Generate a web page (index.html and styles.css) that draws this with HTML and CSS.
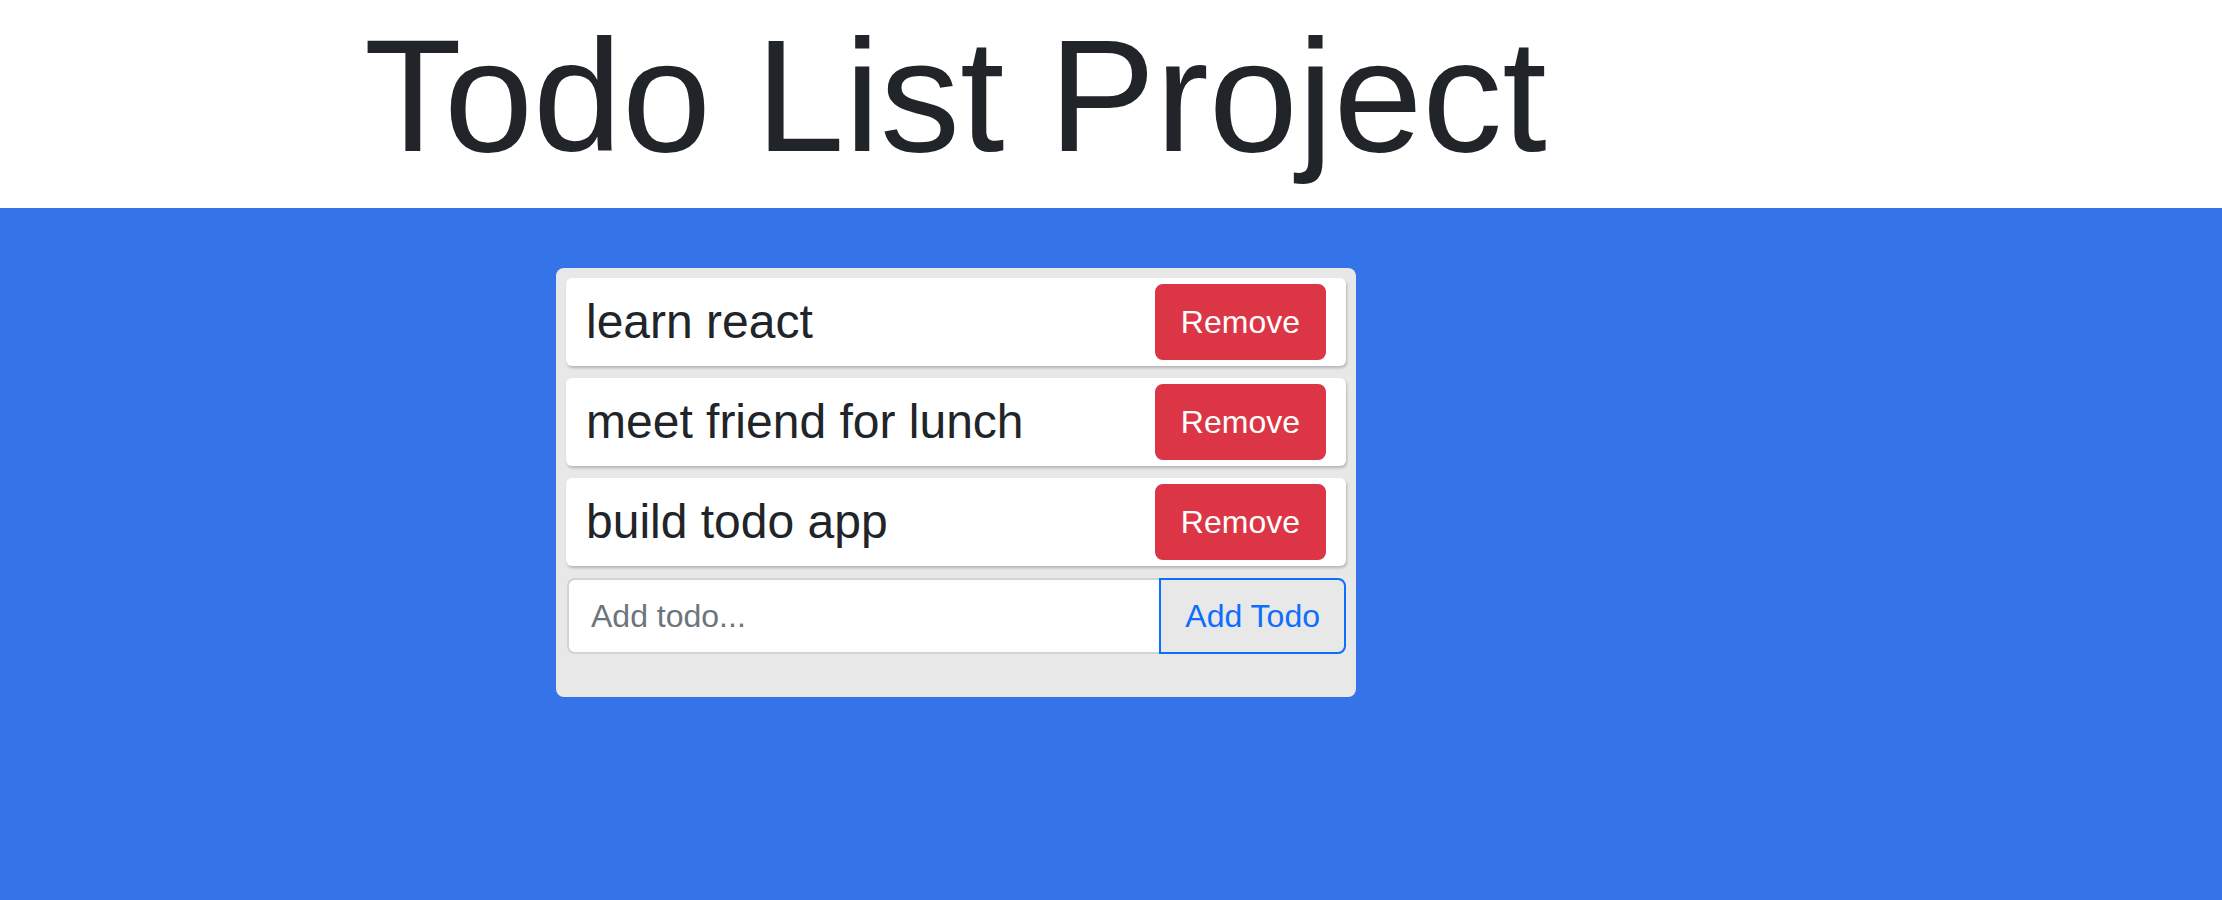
FILE: index.html
```html
<!DOCTYPE html>
<html lang="en">
<head>
<meta charset="utf-8">
<title>Todo List Project</title>
<link rel="stylesheet" href="styles.css">
</head>
<body>
<header class="header">
  <h1 class="title">Todo List Project</h1>
</header>
<main class="main">
  <section class="card">
    <div class="todo">
      <span class="todo-text">learn react</span>
      <button class="btn btn-danger">Remove</button>
    </div>
    <div class="todo">
      <span class="todo-text">meet friend for lunch</span>
      <button class="btn btn-danger">Remove</button>
    </div>
    <div class="todo">
      <span class="todo-text">build todo app</span>
      <button class="btn btn-danger">Remove</button>
    </div>
    <form class="add-form">
      <input class="add-input" type="text" placeholder="Add todo...">
      <button class="btn btn-outline" type="button">Add Todo</button>
    </form>
  </section>
</main>
</body>
</html>
```
FILE: styles.css
```css
* { box-sizing: border-box; }
html, body { margin: 0; padding: 0; }
body {
  font-family: "Liberation Sans", Arial, sans-serif;
  color: #212529;
  background: #3573e8;
  min-height: 900px;
}
.header {
  background: #ffffff;
  padding-left: 364px;
  padding-bottom: 16px;
}
.title {
  margin: 0;
  font-size: 160px;
  font-weight: 400;
  line-height: 192px;
  color: #212529;
}
.main {
  padding-top: 60px;
  padding-left: 556px;
}
.card {
  width: 800px;
  background: #e8e8e8;
  border-radius: 8px;
  padding: 10px 10px 43px 10px;
  display: flex;
  flex-direction: column;
  gap: 12px;
}
.todo {
  height: 88px;
  background: #ffffff;
  border-radius: 6px;
  box-shadow: 1px 2px 3px rgba(0, 0, 0, 0.22);
  display: flex;
  align-items: center;
  justify-content: space-between;
  padding: 0 20px 0 20px;
}
.todo-text {
  font-size: 48px;
  line-height: 72px;
  color: #212529;
}
.btn {
  font-family: "Liberation Sans", Arial, sans-serif;
  font-size: 32px;
  line-height: 48px;
  padding: 12px 24px;
  border: 2px solid transparent;
  border-radius: 8px;
  cursor: pointer;
}
.btn-danger {
  background: #dc3545;
  border-color: #dc3545;
  color: #ffffff;
}
.add-form {
  margin: 0 0 0 1px;
  display: flex;
}
.add-input {
  flex: 1;
  min-width: 0;
  height: 76px;
  font-family: "Liberation Sans", Arial, sans-serif;
  font-size: 32px;
  line-height: 48px;
  padding: 12px 22px;
  border: 2px solid #ced4da;
  border-right: none;
  border-radius: 8px 0 0 8px;
  background: #ffffff;
  color: #212529;
  outline: none;
}
.add-input::placeholder { color: #6c757d; }
.btn-outline {
  height: 76px;
  background: transparent;
  border-color: #0d6efd;
  color: #0d6efd;
  border-radius: 0 8px 8px 0;
  padding: 12px 24px;
}
```
